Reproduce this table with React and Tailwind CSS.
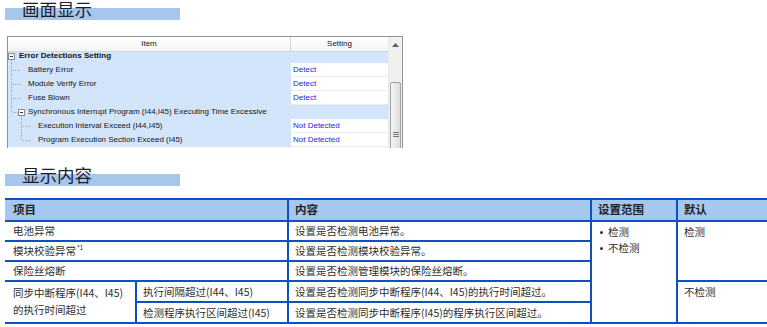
const CJK = { fontFamily: "'Noto Sans CJK SC', 'Noto Sans', sans-serif" };
const GUI = { fontFamily: "'Liberation Sans', Arial, sans-serif" };

const ROWS = [
  { kind: 'root', label: 'Error Detections Setting', value: null },
  { kind: 'child', label: 'Battery Error', value: 'Detect' },
  { kind: 'child', label: 'Module Verify Error', value: 'Detect' },
  { kind: 'child', label: 'Fuse Blown', value: 'Detect' },
  { kind: 'sync', label: 'Synchronous Interrupt Program (I44,I45) Executing Time Excessive', value: null },
  { kind: 'grand', label: 'Execution Interval Exceed (I44,I45)', value: 'Not Detected' },
  { kind: 'grandLast', label: 'Program Execution Section Exceed (I45)', value: 'Not Detected' },
];

function Dots({ x1, y1, x2, y2 }) {
  return <line x1={x1} y1={y1} x2={x2} y2={y2} stroke="#a4a4a4" strokeDasharray="1 1" shapeRendering="crispEdges" />;
}

function Box({ x }) {
  return (
    <g shapeRendering="crispEdges">
      <rect x={x + 0.5} y={4.5} width={6} height={6} fill="#fff" stroke="#8c8c8c" />
      <line x1={x + 2} y1={7.5} x2={x + 5} y2={7.5} stroke="#333" />
    </g>
  );
}

function Tree({ kind }) {
  if (kind === 'root')
    return (
      <svg width="11" height="14" className="shrink-0">
        <Box x={0} />
        <Dots x1={3.5} y1={11} x2={3.5} y2={14} />
      </svg>
    );
  if (kind === 'child')
    return (
      <svg width="20" height="14" className="shrink-0">
        <Dots x1={3.5} y1={0} x2={3.5} y2={14} />
        <Dots x1={5} y1={7.5} x2={12} y2={7.5} />
      </svg>
    );
  if (kind === 'sync')
    return (
      <svg width="20" height="14" className="shrink-0">
        <Dots x1={3.5} y1={0} x2={3.5} y2={7} />
        <Dots x1={5} y1={7.5} x2={10} y2={7.5} />
        <Box x={10} />
        <Dots x1={13.5} y1={11} x2={13.5} y2={14} />
      </svg>
    );
  return (
    <svg width="30" height="14" className="shrink-0">
      <Dots x1={13.5} y1={0} x2={13.5} y2={kind === 'grand' ? 14 : 7} />
      <Dots x1={15} y1={7.5} x2={22} y2={7.5} />
    </svg>
  );
}

function Heading({ children }) {
  return (
    <div
      className="ml-[5px] h-[20px] w-[175px] bg-[linear-gradient(to_bottom,transparent_8px,#a6c6ec_8px)] pl-[17px] text-[17.5px] leading-[18px] text-[#1d1d2b]"
      style={CJK}
    >
      {children}
    </div>
  );
}

function SettingsPanel() {
  return (
    <div className="ml-[7px] mt-[16px] flex h-[112px] w-[396px] border-x border-t border-[#8e9196] text-[8px] text-[#141414]" style={GUI}>
      <div className="flex w-[380px] flex-col">
        <div className="flex h-[15px] border-b border-[#d5d5d5] bg-[linear-gradient(to_bottom,#ffffff,#f3f4f6)] leading-[14px]">
          <div className="w-[283px] border-r border-[#d5d5d5] text-center">Item</div>
          <div className="w-[97px] text-center">Setting</div>
        </div>
        <div className="h-[96px] overflow-hidden">
          <div className="-mt-[3px]">
            {ROWS.map((r) => (
              <div key={r.label} className="flex h-[14px] leading-[14px]">
                <div className="flex w-[283px] items-center bg-[#d3e5fb]">
                  <Tree kind={r.kind} />
                  <span className={r.kind === 'root' ? 'font-bold' : ''}>{r.label}</span>
                </div>
                {r.value ? (
                  <div className="w-[97px] border-b border-[#ececec] bg-white pl-[2px] text-[#2121ee]">{r.value}</div>
                ) : (
                  <div className="w-[97px] bg-[#d3e5fb]" />
                )}
              </div>
            ))}
          </div>
        </div>
      </div>
      <div className="flex w-[14px] flex-col overflow-hidden border-l border-[#e6e6e6] bg-[#f0f0f0]">
        <div className="flex h-[15px] shrink-0 items-center justify-center">
          <svg width="7" height="4">
            <path d="M0 4 L3.5 0 L7 4 Z" fill="#606060" />
          </svg>
        </div>
        <div className="mx-[1px] mt-[30px] flex h-[80px] shrink-0 flex-col items-center rounded-[2px] border border-[#a3a3a3] bg-[linear-gradient(to_right,#f4f4f4,#dcdcdc)] pt-[49px]">
          <div className="flex w-[6px] flex-col gap-[1px]">
            <div className="h-[1px] bg-[#7a7a7a]" />
            <div className="h-[1px] bg-[#7a7a7a]" />
            <div className="h-[1px] bg-[#7a7a7a]" />
          </div>
        </div>
      </div>
    </div>
  );
}

const cell = 'bg-white px-[6px] text-[10.5px] text-[#2e2e2e]';
const one = 'flex items-center';
const head = 'row-start-1 flex items-center bg-[#a6c8ee] px-[6px] text-[11.5px] font-bold text-[#222]';

function Bullet({ children }) {
  return (
    <div className="flex items-center gap-[5px]">
      <span className="h-[3px] w-[3px] shrink-0 rounded-full bg-[#2e2e2e]" />
      <span>{children}</span>
    </div>
  );
}

function InfoTable() {
  return (
    <div
      className="ml-[5px] mt-[12px] grid grid-cols-[130px_150px_301px_84px_1fr] grid-rows-[20px_18px_18px_18px_19px_19px] gap-[2px] bg-[#0e4fc2] py-[2px]"
      style={CJK}
    >
      <div className={`${head} col-span-2 col-start-1 px-[8px]`}>项目</div>
      <div className={`${head} col-start-3`}>内容</div>
      <div className={`${head} col-start-4`}>设置范围</div>
      <div className={`${head} col-start-5`}>默认</div>

      <div className={`${cell} ${one} col-span-2 col-start-1 row-start-2 px-[8px]`}>电池异常</div>
      <div className={`${cell} ${one} col-start-3 row-start-2`}>设置是否检测电池异常。</div>
      <div className={`${cell} col-start-4 row-span-5 row-start-2 pl-[8px] pt-[2px] leading-[16px]`}>
        <Bullet>检测</Bullet>
        <Bullet>不检测</Bullet>
      </div>
      <div className={`${cell} col-start-5 row-span-3 row-start-2 pt-[2px] leading-[16px]`}>检测</div>

      <div className={`${cell} ${one} col-span-2 col-start-1 row-start-3 px-[8px]`}>
        模块校验异常<sup className="ml-[1px] text-[6px]">*1</sup>
      </div>
      <div className={`${cell} ${one} col-start-3 row-start-3`}>设置是否检测模块校验异常。</div>

      <div className={`${cell} ${one} col-span-2 col-start-1 row-start-4 px-[8px]`}>保险丝熔断</div>
      <div className={`${cell} ${one} col-start-3 row-start-4`}>设置是否检测管理模块的保险丝熔断。</div>

      <div className={`${cell} col-start-1 row-span-2 row-start-5 px-[8px] pt-[2px] leading-[17px]`}>
        同步中断程序(I44、I45)
        <br />
        的执行时间超过
      </div>
      <div className={`${cell} ${one} col-start-2 row-start-5`}>执行间隔超过(I44、I45)</div>
      <div className={`${cell} ${one} col-start-3 row-start-5`}>设置是否检测同步中断程序(I44、I45)的执行时间超过。</div>
      <div className={`${cell} col-start-5 row-span-2 row-start-5 pt-[2px] leading-[16px]`}>不检测</div>

      <div className={`${cell} ${one} col-start-2 row-start-6`}>检测程序执行区间超过(I45)</div>
      <div className={`${cell} ${one} col-start-3 row-start-6`}>设置是否检测同步中断程序(I45)的程序执行区间超过。</div>
    </div>
  );
}

export default function App() {
  return (
    <div className="h-[327px] w-[767px] overflow-hidden bg-white">
      <Heading>画面显示</Heading>
      <SettingsPanel />
      <div className="mt-[18px]">
        <Heading>显示内容</Heading>
      </div>
      <InfoTable />
    </div>
  );
}
